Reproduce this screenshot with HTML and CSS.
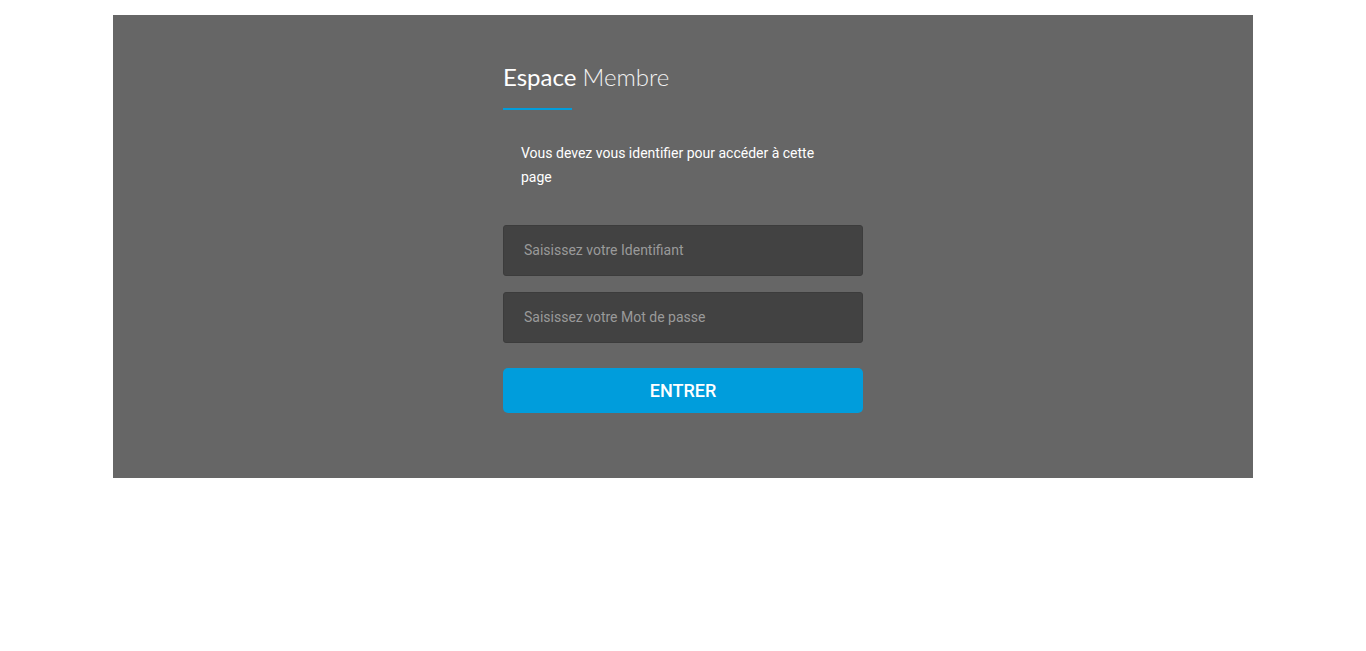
FILE: index.html
```html
<!DOCTYPE html>
<html lang="fr">
<head>
<meta charset="utf-8">
<title>Espace Membre</title>
<link rel="stylesheet" href="styles.css">
</head>
<body>
<section class="panel">
  <div class="login">
    <h2 class="title"><span class="title-strong">Espace</span> <span class="title-light">Membre</span></h2>
    <div class="title-bar"></div>
    <p class="notice">Vous devez vous identifier pour accéder à cette page</p>
    <form class="form">
      <input class="field" type="text" placeholder="Saisissez votre Identifiant">
      <input class="field" type="password" placeholder="Saisissez votre Mot de passe">
      <button class="submit" type="button">ENTRER</button>
    </form>
  </div>
</section>
</body>
</html>
```
FILE: styles.css
```css
* { box-sizing: border-box; }
html, body { margin: 0; padding: 0; background: #fff; }
body { font-family: Roboto, "Liberation Sans", sans-serif; padding-top: 15px; }

.panel {
  width: 1140px;
  height: 463px;
  margin: 0 auto;
  background: #666666;
  padding-top: 48px;
}

.login {
  width: 360px;
  margin: 0 auto;
}

.title {
  margin: 0;
  font-family: Lato, "Open Sans", sans-serif;
  font-size: 24px;
  line-height: 1.2;
  color: #fff;
  font-weight: 400;
  padding-bottom: 16px;
}
.title-light { font-weight: 300; color: #f2f2f2; }

.title-bar {
  width: 69px;
  height: 2px;
  background: #009ddc;
}

.notice {
  margin: 31px 0 0;
  padding: 0 18px;
  font-size: 14px;
  line-height: 24px;
  color: #fff;
}

.form {
  margin-top: 36px;
  display: flex;
  flex-direction: column;
}

.field {
  height: 51px;
  width: 100%;
  margin: 0 0 16px;
  padding: 0 20px;
  background: #424242;
  border: 1px solid #3c3c3c;
  border-radius: 3px;
  font-family: Roboto, "Liberation Sans", sans-serif;
  font-size: 14px;
  color: #ddd;
  outline: none;
}
.field::placeholder { color: #9a9a9a; }

.submit {
  margin-top: 9px;
  height: 45px;
  width: 100%;
  border: 0;
  border-radius: 5px;
  background: #009ddc;
  color: #fff;
  font-family: Roboto, "Liberation Sans", sans-serif;
  font-size: 18px;
  font-weight: 500;
  cursor: pointer;
}
```
